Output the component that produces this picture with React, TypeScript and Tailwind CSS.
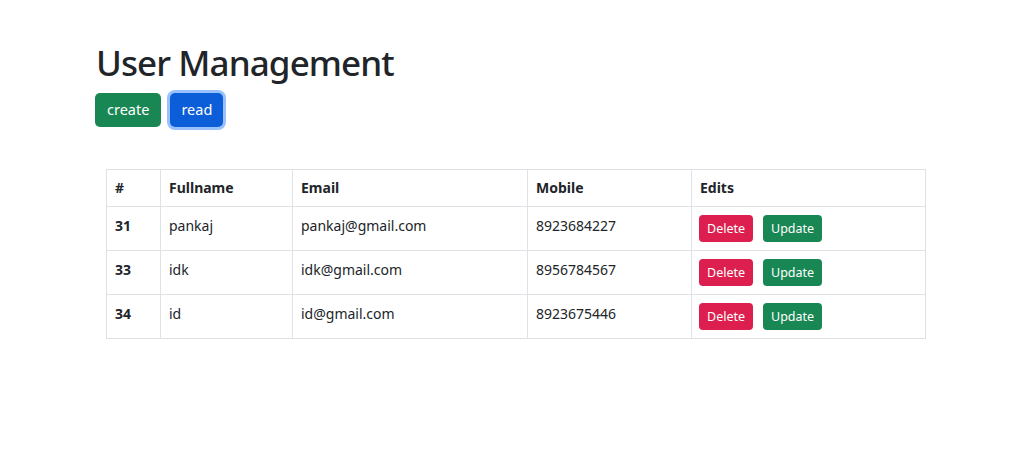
import React from 'react';

const users = [
  { id: 31, name: 'pankaj', email: 'pankaj@gmail.com', mobile: '8923684227' },
  { id: 33, name: 'idk', email: 'idk@gmail.com', mobile: '8956784567' },
  { id: 34, name: 'id', email: 'id@gmail.com', mobile: '8923675446' },
];

export default function App() {
  return (
    <div
      className="min-h-[452px] bg-white text-[#212529]"
      style={{ fontFamily: '"Noto Sans", "Open Sans", sans-serif' }}
    >
      <div className="pl-[95px] pt-[42px] pr-[108px]">
        <h1 className="ml-[1px] text-[35px] font-medium leading-[1.2] tracking-[-0.9px]">User Management</h1>
        <div className="mt-[9px] flex gap-[9px]">
          <button className="h-[34px] rounded-[5px] bg-[#198754] px-[12px] text-[14.5px] text-white">create</button>
          <button className="h-[34px] rounded-[5px] bg-[#0b5ed7] px-[11px] text-[14.5px] text-white ring-[3px] ring-[#98c1fe]">
            read
          </button>
        </div>

        <table className="mt-[42px] ml-[11px] w-[820px] border-collapse border border-[#dee2e6] text-[14px] leading-[24px]">
          <thead>
            <tr className="text-left">
              <th className="w-[54px] border border-[#dee2e6] px-[8px] py-[6px] font-bold">#</th>
              <th className="w-[132px] border border-[#dee2e6] px-[8px] py-[6px] font-bold">Fullname</th>
              <th className="w-[235px] border border-[#dee2e6] px-[8px] py-[6px] font-bold">Email</th>
              <th className="w-[164px] border border-[#dee2e6] px-[8px] py-[6px] font-bold">Mobile</th>
              <th className="border border-[#dee2e6] px-[8px] py-[6px] font-bold">Edits</th>
            </tr>
          </thead>
          <tbody>
            {users.map((u) => (
              <tr key={u.id}>
                <td className="border border-[#dee2e6] px-[8px] py-[7px] align-top font-bold">{u.id}</td>
                <td className="border border-[#dee2e6] px-[8px] py-[7px] align-top">{u.name}</td>
                <td className="border border-[#dee2e6] px-[8px] py-[7px] align-top">{u.email}</td>
                <td className="border border-[#dee2e6] px-[8px] py-[7px] align-top">{u.mobile}</td>
                <td className="border border-[#dee2e6] px-[7px] py-[8px] align-top">
                  <div className="flex gap-[10px]">
                    <button className="h-[27px] rounded-[4px] bg-[#dc1f4e] px-[8px] text-[12.5px] text-white">Delete</button>
                    <button className="h-[27px] rounded-[4px] bg-[#198754] px-[8px] text-[12.5px] text-white">Update</button>
                  </div>
                </td>
              </tr>
            ))}
          </tbody>
        </table>
      </div>
    </div>
  );
}
